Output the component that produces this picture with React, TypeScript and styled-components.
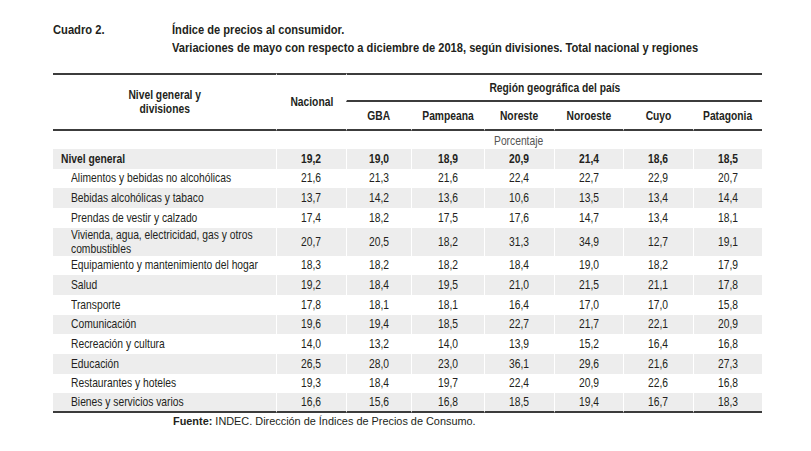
import React from "react";
import styled, { createGlobalStyle } from "styled-components";

const GlobalStyle = createGlobalStyle`
  body {
    margin: 0;
    background: #fff;
  }
`;

const Page = styled.div`
  width: 811px;
  height: 451px;
  padding: 21px 0 0 53px;
  box-sizing: border-box;
  font-family: "Liberation Sans", Arial, sans-serif;
  color: #231f20;
  overflow: hidden;
`;

// The source uses a condensed face (Arial Narrow), which is not installed:
// squeeze Liberation Sans horizontally instead.
const Narrow = styled.span<{ $origin?: "left" | "center"; $scale?: number }>`
  display: inline-block;
  white-space: nowrap;
  transform: scaleX(${({ $scale }) => $scale ?? 0.83});
  transform-origin: ${({ $origin }) => ($origin === "left" ? "left center" : "center center")};
`;

const TitleBlock = styled.div`
  display: flex;
  font-size: 13px;
  font-weight: bold;
  line-height: 18px;
  white-space: nowrap;
`;

const TitleLabel = styled.div`
  width: 119px;
  flex-shrink: 0;
`;

const Table = styled.table`
  margin-top: 16px;
  width: 709px;
  border-collapse: separate;
  border-spacing: 0;
  table-layout: fixed;
  font-size: 12.4px;
  line-height: 14px;
`;

const Head = styled.th<{ $top?: boolean; $rule?: boolean; $gap?: boolean }>`
  font-weight: bold;
  text-align: center;
  vertical-align: middle;
  padding: 0;
  border-left: ${({ $gap }) => ($gap ? "1px solid #fff" : "0")};
  border-top: ${({ $top }) => ($top ? "2px solid #3c3c3c" : "0")};
  border-bottom: ${({ $rule }) => ($rule ? "2px solid #3c3c3c" : "0")};
`;

const HeadRow = styled.tr<{ $h: number }>`
  height: ${({ $h }) => $h}px;
`;

const UnitRow = styled.tr`
  height: 18px;
  td {
    padding: 3px 0 1px;
    color: #555;
    text-align: center;
    vertical-align: top;
    font-weight: normal;
  }
`;

const Row = styled.tr<{ $shade: boolean; $h: number; $bold?: boolean; $last?: boolean }>`
  height: ${({ $h }) => $h}px;
  font-weight: ${({ $bold }) => ($bold ? "bold" : "normal")};
  td {
    padding: 0;
    background: ${({ $shade }) => ($shade ? "#ededed" : "#fff")};
    border-bottom: ${({ $last }) => ($last ? "2px solid #3c3c3c" : "0")};
    vertical-align: middle;
  }
`;

const Label = styled.td<{ $indent: number }>`
  text-align: left;
  white-space: nowrap;
  padding-left: ${({ $indent }) => $indent}px !important;
`;

const Num = styled.td`
  text-align: center;
  border-left: 1px solid #fff;
`;

const Source = styled.div`
  margin-top: 1px;
  padding-left: 120px;
  font-size: 10.9px;
  line-height: 14px;
  color: #231f20;
  b {
    font-weight: bold;
  }
`;

const widths = [223, 70, 65, 73, 70, 69, 70, 69];
const regions = ["GBA", "Pampeana", "Noreste", "Noroeste", "Cuyo", "Patagonia"];

type RowData = { label: React.ReactNode; values: string[]; double?: boolean };

const general = ["19,2", "19,0", "18,9", "20,9", "21,4", "18,6", "18,5"];

const rows: RowData[] = [
  { label: "Alimentos y bebidas no alcohólicas", values: ["21,6", "21,3", "21,6", "22,4", "22,7", "22,9", "20,7"] },
  { label: "Bebidas alcohólicas y tabaco", values: ["13,7", "14,2", "13,6", "10,6", "13,5", "13,4", "14,4"] },
  { label: "Prendas de vestir y calzado", values: ["17,4", "18,2", "17,5", "17,6", "14,7", "13,4", "18,1"] },
  {
    label: (
      <>
        Vivienda, agua, electricidad, gas y otros
        <br />
        combustibles
      </>
    ),
    values: ["20,7", "20,5", "18,2", "31,3", "34,9", "12,7", "19,1"],
    double: true,
  },
  { label: "Equipamiento y mantenimiento del hogar", values: ["18,3", "18,2", "18,2", "18,4", "19,0", "18,2", "17,9"] },
  { label: "Salud", values: ["19,2", "18,4", "19,5", "21,0", "21,5", "21,1", "17,8"] },
  { label: "Transporte", values: ["17,8", "18,1", "18,1", "16,4", "17,0", "17,0", "15,8"] },
  { label: "Comunicación", values: ["19,6", "19,4", "18,5", "22,7", "21,7", "22,1", "20,9"] },
  { label: "Recreación y cultura", values: ["14,0", "13,2", "14,0", "13,9", "15,2", "16,4", "16,8"] },
  { label: "Educación", values: ["26,5", "28,0", "23,0", "36,1", "29,6", "21,6", "27,3"] },
  { label: "Restaurantes y hoteles", values: ["19,3", "18,4", "19,7", "22,4", "20,9", "22,6", "16,8"] },
  { label: "Bienes y servicios varios", values: ["16,6", "15,6", "16,8", "18,5", "19,4", "16,7", "18,3"] },
];

const ROW_H = 19.66;

export default function App() {
  return (
    <Page>
      <GlobalStyle />
      <TitleBlock>
        <TitleLabel>
          <Narrow $origin="left" $scale={0.86}>Cuadro 2.</Narrow>
        </TitleLabel>
        <div>
          <Narrow $origin="left" $scale={0.855}>
            Índice de precios al consumidor.
            <br />
            Variaciones de mayo con respecto a diciembre de 2018, según divisiones. Total nacional y regiones
          </Narrow>
        </div>
      </TitleBlock>

      <Table>
        <colgroup>
          {widths.map((w, i) => (
            <col key={i} style={{ width: w }} />
          ))}
        </colgroup>
        <thead>
          <HeadRow $h={29}>
            <Head rowSpan={2} $top $rule>
              <Narrow>
                Nivel general y
                <br />
                divisiones
              </Narrow>
            </Head>
            <Head rowSpan={2} $top $rule $gap>
              <Narrow>Nacional</Narrow>
            </Head>
            <Head colSpan={6} $top $rule $gap>
              <Narrow>Región geográfica del país</Narrow>
            </Head>
          </HeadRow>
          <HeadRow $h={29}>
            {regions.map((r) => (
              <Head key={r} $rule $gap>
                <Narrow>{r}</Narrow>
              </Head>
            ))}
          </HeadRow>
        </thead>
        <tbody>
          <UnitRow>
            <td />
            <td colSpan={7}>
              <Narrow>Porcentaje</Narrow>
            </td>
          </UnitRow>
          <Row $shade $bold $h={ROW_H}>
            <Label $indent={8}>
              <Narrow $origin="left">Nivel general</Narrow>
            </Label>
            {general.map((v, i) => (
              <Num key={i}>
                <Narrow>{v}</Narrow>
              </Num>
            ))}
          </Row>
          {rows.map((r, idx) => (
            <Row
              key={idx}
              $shade={idx % 2 === 1}
              $h={r.double ? 28 : ROW_H}
              $last={idx === rows.length - 1}
            >
              <Label $indent={18}>
                <Narrow $origin="left">{r.label}</Narrow>
              </Label>
              {r.values.map((v, i) => (
                <Num key={i}>
                  <Narrow>{v}</Narrow>
                </Num>
              ))}
            </Row>
          ))}
        </tbody>
      </Table>

      <Source>
        <b>Fuente:</b> INDEC. Dirección de Índices de Precios de Consumo.
      </Source>
    </Page>
  );
}
